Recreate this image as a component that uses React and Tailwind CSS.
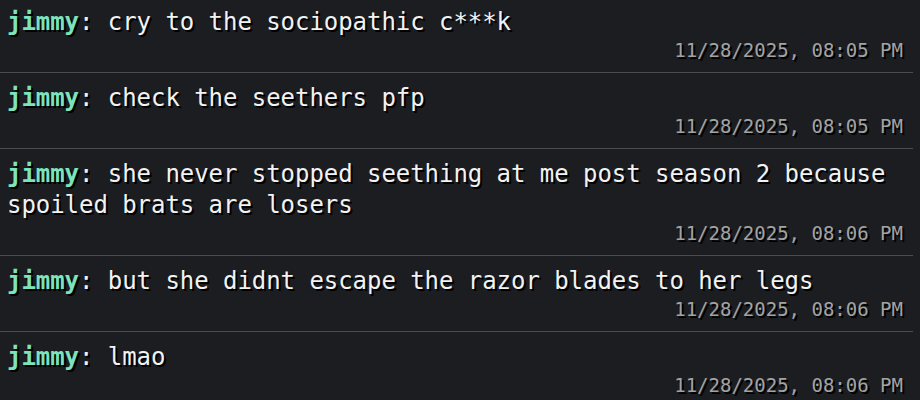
import React from 'react';

const MESSAGES = [
  { user: 'jimmy', text: 'cry to the sociopathic c***k', time: '11/28/2025, 08:05 PM' },
  { user: 'jimmy', text: 'check the seethers pfp', time: '11/28/2025, 08:05 PM' },
  { user: 'jimmy', text: 'she never stopped seething at me post season 2 because spoiled brats are losers', time: '11/28/2025, 08:06 PM' },
  { user: 'jimmy', text: 'but she didnt escape the razor blades to her legs', time: '11/28/2025, 08:06 PM' },
  { user: 'jimmy', text: 'lmao', time: '11/28/2025, 08:06 PM' },
];

export default function App() {
  return (
    <div
      className="w-[920px] h-[400px] overflow-hidden bg-[#1b1d21]"
      style={{ fontFamily: '"DejaVu Sans Mono", "Liberation Mono", monospace' }}
    >
      <div className="w-[913px] -mt-[3px]">
        {MESSAGES.map((m, i) => (
          <div key={i} className="border-b border-[#4a4b4e] pt-[10px] pb-[10px] pl-[7px] pr-[10px]">
            <p className="text-[24px] leading-[31px] text-[#f2f2f2] [text-shadow:2px_2px_0_#000] tracking-[-0.05px]">
              <span className="font-bold text-[#7de3bd]">{m.user}</span>: {m.text}
            </p>
            <p className="text-right text-[19px] leading-[24px] text-[#a3a3a3] [text-shadow:2px_2px_0_#000]">
              {m.time}
            </p>
          </div>
        ))}
      </div>
    </div>
  );
}
